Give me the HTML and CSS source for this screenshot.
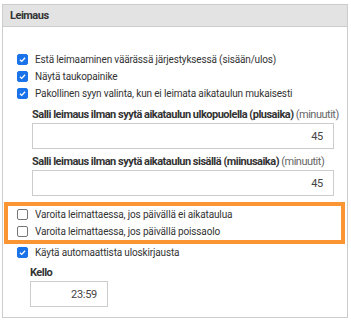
FILE: index.html
```html
<!DOCTYPE html>
<html>
<head>
<meta charset="utf-8">
<link rel="stylesheet" href="styles.css">
</head>
<body>
<div class="panel">
  <div class="panel-head">Leimaus</div>
  <div class="panel-body">
    <label class="row"><span class="cb on"><svg viewBox="0 0 12 12"><path d="M2.6 6.2 L5 8.5 L9.4 3.6" /></svg></span>Estä leimaaminen väärässä järjestyksessä (sisään/ulos)</label>
    <label class="row"><span class="cb on"><svg viewBox="0 0 12 12"><path d="M2.6 6.2 L5 8.5 L9.4 3.6" /></svg></span>Näytä taukopainike</label>
    <label class="row"><span class="cb on"><svg viewBox="0 0 12 12"><path d="M2.6 6.2 L5 8.5 L9.4 3.6" /></svg></span>Pakollinen syyn valinta, kun ei leimata aikataulun mukaisesti</label>
    <div class="field">
      <div class="flabel"><b>Salli leimaus ilman syytä aikataulun ulkopuolella (plusaika)</b> <span class="unit">(minuutit)</span></div>
      <div class="input">45</div>
    </div>
    <div class="field">
      <div class="flabel"><b>Salli leimaus ilman syytä aikataulun sisällä (miinusaika)</b> <span class="unit">(minuutit)</span></div>
      <div class="input">45</div>
    </div>
    <div class="highlight">
      <label class="row"><span class="cb"></span>Varoita leimattaessa, jos päivällä ei aikataulua</label>
      <label class="row"><span class="cb"></span>Varoita leimattaessa, jos päivällä poissaolo</label>
    </div>
    <label class="row"><span class="cb on"><svg viewBox="0 0 12 12"><path d="M2.6 6.2 L5 8.5 L9.4 3.6" /></svg></span>Käytä automaattista uloskirjausta</label>
    <div class="field small">
      <div class="flabel"><b>Kello</b></div>
      <div class="input short">23:59</div>
    </div>
  </div>
</div>
</body>
</html>
```
FILE: styles.css
```css
html, body {
  margin: 0;
  padding: 0;
  background: #ffffff;
}
body {
  font-family: Roboto, "Noto Sans", sans-serif;
  font-size: 10px;
  letter-spacing: -0.15px;
  color: #333333;
}
.panel {
  margin: 4px 0 0 2px;
  width: 344px;
  height: 312px;
  border: 1px solid #cccccc;
  box-sizing: content-box;
}
.panel-head {
  height: 21px;
  line-height: 21px;
  background: #e3e3e3;
  border-bottom: 1px solid #cccccc;
  padding-left: 7px;
  font-weight: bold;
  font-size: 11px;
  letter-spacing: -0.5px;
  color: #333333;
}
.panel-body {
  padding: 24px 13px 0 14px;
}
.row {
  display: flex;
  align-items: center;
  height: 17px;
  white-space: nowrap;
}
.cb {
  width: 11px;
  height: 11px;
  box-sizing: border-box;
  border-radius: 2px;
  border: 1px solid #767676;
  background: #ffffff;
  margin-right: 7px;
  display: flex;
  align-items: center;
  justify-content: center;
  flex: none;
}
.cb.on {
  background: #1a73e8;
  border-color: #1a73e8;
}
.cb svg {
  width: 11px;
  height: 11px;
  fill: none;
  stroke: #ffffff;
  stroke-width: 1.8;
}
.field {
  padding-left: 15px;
  margin-top: 5px;
}
.flabel {
  height: 16px;
  line-height: 16px;
  white-space: nowrap;
  font-size: 11px;
  letter-spacing: -0.5px;
}
.flabel b {
  font-weight: bold;
  color: #333333;
}
.unit {
  color: #666666;
}
.input {
  height: 26px;
  line-height: 26px;
  border: 1px solid #cccccc;
  box-sizing: border-box;
  text-align: right;
  padding-right: 10px;
  color: #444444;
  font-size: 11px;
  letter-spacing: -0.3px;
}
.highlight {
  margin: 6px -11px 0 -13px;
  border: 4px solid #fb9433;
  padding-left: 9px;
}
.field.small {
  padding-left: 13px;
  margin-top: 4px;
}
.input.short {
  width: 78px;
}
```
